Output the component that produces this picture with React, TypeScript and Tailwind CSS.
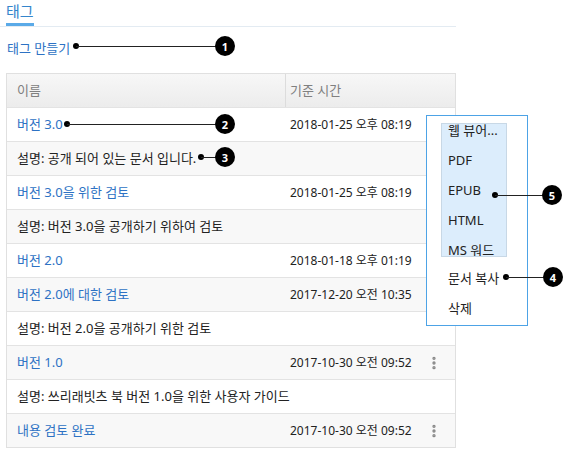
import { MoreVertical } from "lucide-react";

type Row = {
  name: string;
  time?: string;
  desc?: boolean;
  kebab?: boolean;
};

const ROWS: Row[] = [
  { name: "버전 3.0", time: "2018-01-25 오후 08:19" },
  { name: "설명: 공개 되어 있는 문서 입니다.", desc: true },
  { name: "버전 3.0을 위한 검토", time: "2018-01-25 오후 08:19" },
  { name: "설명: 버전 3.0을 공개하기 위하여 검토", desc: true },
  { name: "버전 2.0", time: "2018-01-18 오후 01:19" },
  { name: "버전 2.0에 대한 검토", time: "2017-12-20 오전 10:35" },
  { name: "설명: 버전 2.0을 공개하기 위한 검토", desc: true },
  { name: "버전 1.0", time: "2017-10-30 오전 09:52", kebab: true },
  { name: "설명: 쓰리래빗츠 북 버전 1.0을 위한 사용자 가이드", desc: true },
  { name: "내용 검토 완료", time: "2017-10-30 오전 09:52", kebab: true },
];

const EXPORTS = ["웹 뷰어...", "PDF", "EPUB", "HTML", "MS 워드"];

// annotation: dot at x1, line to a numbered badge centred at x2
const Callout = ({ x1, x2, y, n }: { x1: number; x2: number; y: number; n: number }) => (
  <div className="absolute" style={{ left: x1 - 3, top: y - 10, width: x2 - x1 + 13, height: 20 }}>
    <div className="absolute left-0 top-[7px] w-[6px] h-[6px] rounded-full bg-black" />
    <div className="absolute left-[3px] top-[9.5px] h-px bg-[#222]" style={{ width: x2 - x1 - 8 }} />
    <div className="absolute right-0 top-0 w-[20px] h-[20px] rounded-full bg-black text-white text-[11px] font-bold flex items-center justify-center leading-none">
      {n}
    </div>
  </div>
);

const App = () => {
  return (
    <div className="relative w-[563px] h-[473px] bg-white text-[13px] text-[#222] [font-family:'Noto_Sans','Noto_Sans_CJK_KR',sans-serif]">
      <div className="w-[456px] border-b border-[#e3ebf2]">
        <span className="inline-block ml-[6px] pt-[1px] pb-[1px] border-b-[3px] border-[#5aaae8] text-[15px] leading-[21px] text-[#3585cc]">
          태그
        </span>
      </div>

      <div className="mt-[10px] ml-[7px] h-[22px] leading-[22px] text-[#2d72c4]">태그 만들기</div>

      <div className="mt-[14px] ml-[6px] w-[450px] border border-[#e0e0e0]">
        <div className="grid grid-cols-[278px_1fr] h-[33px] bg-gradient-to-b from-[#f7f7f7] to-[#ececec] text-[#808080]">
          <div className="flex items-center pl-[10px]">이름</div>
          <div className="flex items-center pl-[4px] border-l border-[#dcdcdc]">기준 시간</div>
        </div>
        {ROWS.map((row, i) => (
          <div
            key={row.name}
            className={`grid grid-cols-[278px_1fr] h-[34px] border-t border-[#e3e3e3] ${i % 2 === 0 ? "bg-white" : "bg-[#f8f8f8]"}`}
          >
            {row.desc ? (
              <div className="col-span-2 flex items-center pl-[10px] whitespace-nowrap">{row.name}</div>
            ) : (
              <>
                <div className="flex items-center pl-[10px] text-[#2d72c4]">{row.name}</div>
                <div className="flex items-center pl-[5px] whitespace-nowrap text-[12px]">
                  <span>{row.time}</span>
                  {row.kebab && <MoreVertical className="ml-auto mr-[13px] w-[16px] h-[16px] text-[#888]" strokeWidth={3} />}
                </div>
              </>
            )}
          </div>
        ))}
      </div>

      {/* context menu */}
      <div className="absolute left-[426px] top-[115px] w-[102px] h-[211px] bg-white border border-[#4da3e6] pt-[7px] px-[14px]">
        <div className="w-[66px] h-[134px] overflow-hidden bg-[#dcedfc] border border-[#c8d8e6]">
          <div className="-mt-[8px]">
            {EXPORTS.map((e) => (
              <div key={e} className="h-[30px] flex items-center pl-[6px] whitespace-nowrap">
                {e}
              </div>
            ))}
          </div>
        </div>
        <div className="mt-[7px] h-[30px] flex items-center pl-[7px]">문서 복사</div>
        <div className="h-[30px] flex items-center pl-[7px]">삭제</div>
      </div>

      <Callout x1={76} x2={225} y={46} n={1} />
      <Callout x1={67} x2={225} y={124} n={2} />
      <Callout x1={201} x2={225} y={157} n={3} />
      <Callout x1={506} x2={553} y={277} n={4} />
      <Callout x1={495} x2={552} y={195} n={5} />
    </div>
  );
};

export default App;
